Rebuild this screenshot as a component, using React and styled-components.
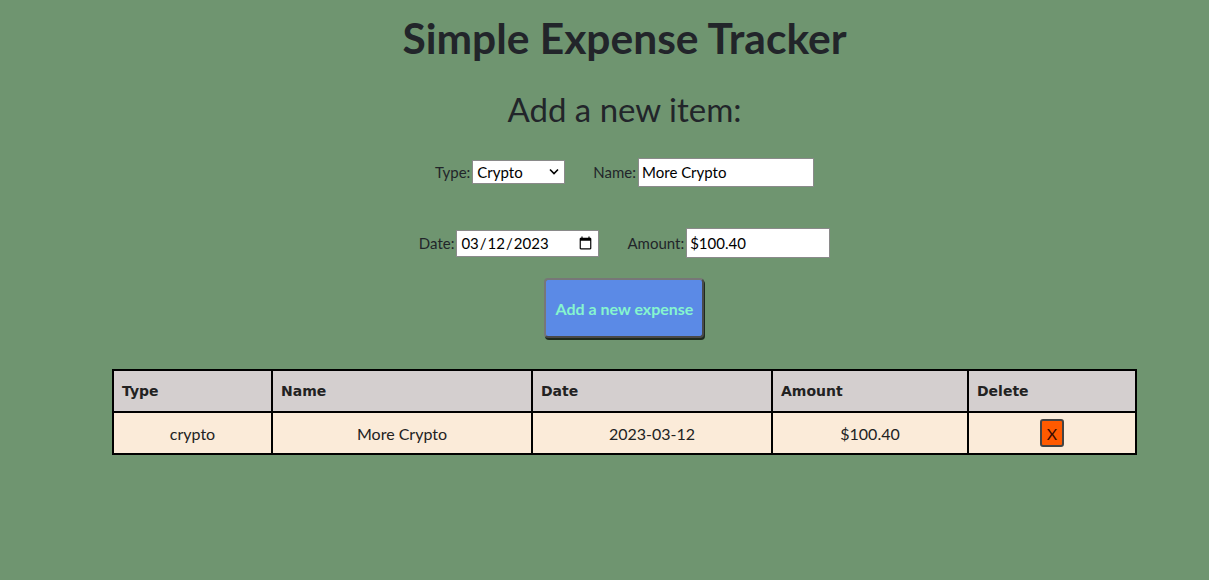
import { useState } from "react";
import styled, { createGlobalStyle } from "styled-components";

const GlobalStyle = createGlobalStyle`
  html, body {
    margin: 0;
    padding: 0;
    background-color: #6f9570;
  }
  body {
    font-family: "Lato", "Open Sans", sans-serif;
    color: #22252a;
  }
`;

const Page = styled.div`
  display: flex;
  flex-direction: column;
  align-items: center;
  padding: 13px 0 40px 40px;
`;

const Title = styled.h1`
  margin: 0;
  font-size: 42.5px;
  font-weight: 700;
  line-height: 50px;
`;

const SubTitle = styled.h2`
  margin: 26px 0 0;
  font-size: 33px;
  font-weight: 400;
  line-height: 40px;
`;

const Form = styled.form`
  display: flex;
  flex-direction: column;
  align-items: center;
  margin-top: 28px;
`;

const FormRow = styled.div`
  display: flex;
  align-items: center;
  gap: 28px;
  height: 30px;
  margin-bottom: ${(p) => p.$space || 0}px;
`;

const Field = styled.div`
  display: flex;
  align-items: center;
  gap: 2px;
`;

const Label = styled.label`
  font-size: 15px;
`;

const SelectWrap = styled.div`
  position: relative;
  width: 93px;
  height: 24px;
`;

const Select = styled.select`
  appearance: none;
  width: 100%;
  height: 100%;
  border: 1px solid #8a8a8a;
  border-radius: 0;
  background: #fff;
  font-family: inherit;
  font-size: 15px;
  padding: 0 0 0 4px;
  color: #000;
`;

const Chevron = styled.svg`
  position: absolute;
  right: 6px;
  top: 8px;
  pointer-events: none;
`;

const TextInput = styled.input`
  box-sizing: border-box;
  width: ${(p) => p.$w}px;
  height: ${(p) => p.$h}px;
  border: 1px solid #8a8a8a;
  border-radius: 0;
  background: #fff;
  font-family: inherit;
  font-size: 15px;
  padding: 0 3px;
  color: #000;
`;

const AddButton = styled.button`
  width: 160px;
  height: 60px;
  margin-top: 20px;
  background-color: #5b8ae6;
  color: #86f5cf;
  font-family: inherit;
  font-size: 16px;
  font-weight: 700;
  border: 2px solid #4a4a4a;
  border-top-color: #777;
  border-left-color: #777;
  border-radius: 4px;
  box-shadow: 1px 2px 0 #1e2a1e;
  cursor: pointer;
`;

const Table = styled.table`
  width: 1023px;
  margin-top: 31px;
  table-layout: fixed;
  border-collapse: collapse;
  border: 2px solid #000;
`;

const Col = styled.col`
  width: ${(p) => p.$w}px;
`;

const HeadCell = styled.th`
  height: 40px;
  padding: 0 8px;
  text-align: left;
  background-color: #d4cfcf;
  border: 2px solid #000;
  font-family: "DejaVu Sans", sans-serif;
  font-size: 14px;
  font-weight: 700;
  color: #222;
`;

const Cell = styled.td`
  height: 38px;
  padding: 1px;
  text-align: center;
  background-color: #fbebd9;
  border: 2px solid #000;
  font-size: 16px;
  color: #222;
`;

const DeleteButton = styled.button`
  display: block;
  margin: 0 auto;
  width: 24px;
  height: 28px;
  padding: 0;
  background-color: #ff5a00;
  color: #3a0a00;
  font-family: inherit;
  font-size: 16px;
  border: 2px solid #444;
  border-radius: 3px;
  cursor: pointer;
`;

const columns = [
  { key: "type", label: "Type", w: 159 },
  { key: "name", label: "Name", w: 260 },
  { key: "date", label: "Date", w: 240 },
  { key: "amount", label: "Amount", w: 196 },
  { key: "delete", label: "Delete", w: 168 },
];

export default function App() {
  const [type, setType] = useState("crypto");
  const [name, setName] = useState("More Crypto");
  const [date, setDate] = useState("2023-03-12");
  const [amount, setAmount] = useState("$100.40");
  const [items, setItems] = useState([
    { id: 1, type: "crypto", name: "More Crypto", date: "2023-03-12", amount: "$100.40" },
  ]);

  const handleSubmit = (e) => {
    e.preventDefault();
    setItems([...items, { id: Date.now(), type, name, date, amount }]);
  };

  return (
    <>
      <GlobalStyle />
      <Page>
        <Title>Simple Expense Tracker</Title>
        <SubTitle>Add a new item:</SubTitle>
        <Form onSubmit={handleSubmit}>
          <FormRow $space={41}>
            <Field>
              <Label htmlFor="type">Type:</Label>
              <SelectWrap>
                <Select id="type" value={type} onChange={(e) => setType(e.target.value)}>
                  <option value="crypto">Crypto</option>
                  <option value="food">Food</option>
                  <option value="rent">Rent</option>
                </Select>
                <Chevron width="10" height="7" viewBox="0 0 10 7">
                  <path d="M1 1.5l4 4 4-4" fill="none" stroke="#000" strokeWidth="1.6" />
                </Chevron>
              </SelectWrap>
            </Field>
            <Field>
              <Label htmlFor="name">Name:</Label>
              <TextInput id="name" $w={176} $h={29} value={name} onChange={(e) => setName(e.target.value)} />
            </Field>
          </FormRow>
          <FormRow>
            <Field>
              <Label htmlFor="date">Date:</Label>
              <TextInput id="date" type="date" $w={143} $h={27} value={date} onChange={(e) => setDate(e.target.value)} />
            </Field>
            <Field>
              <Label htmlFor="amount">Amount:</Label>
              <TextInput id="amount" $w={144} $h={30} value={amount} onChange={(e) => setAmount(e.target.value)} />
            </Field>
          </FormRow>
          <AddButton type="submit">Add a new expense</AddButton>
        </Form>
        <Table>
          <colgroup>
            {columns.map((c) => (
              <Col key={c.key} $w={c.w} />
            ))}
          </colgroup>
          <thead>
            <tr>
              {columns.map((c) => (
                <HeadCell key={c.key}>{c.label}</HeadCell>
              ))}
            </tr>
          </thead>
          <tbody>
            {items.map((item) => (
              <tr key={item.id}>
                <Cell>{item.type}</Cell>
                <Cell>{item.name}</Cell>
                <Cell>{item.date}</Cell>
                <Cell>{item.amount}</Cell>
                <Cell>
                  <DeleteButton onClick={() => setItems(items.filter((i) => i.id !== item.id))}>X</DeleteButton>
                </Cell>
              </tr>
            ))}
          </tbody>
        </Table>
      </Page>
    </>
  );
}
